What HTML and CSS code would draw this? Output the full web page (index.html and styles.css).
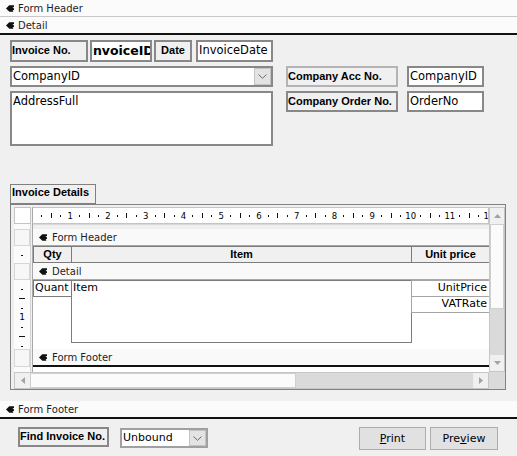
FILE: index.html
```html
<!DOCTYPE html>
<html>
<head>
<meta charset="utf-8">
<title>Invoice form design</title>
<link rel="stylesheet" href="styles.css">
</head>
<body>
<div class="form">
  <div class="bar bar-top">
    <svg class="sel-icon" viewBox="0 0 8 7"><path d="M0 3.5 L3.2 0.3 L8 0.3 L8 2 L6.4 2.4 L8 3.4 L8 5 L6.6 5.3 L7.4 6.8 L3.4 6.8 Z"/></svg>
    <span>Form Header</span>
  </div>
  <div class="bar bar-detail">
    <svg class="sel-icon" viewBox="0 0 8 7"><path d="M0 3.5 L3.2 0.3 L8 0.3 L8 2 L6.4 2.4 L8 3.4 L8 5 L6.6 5.3 L7.4 6.8 L3.4 6.8 Z"/></svg>
    <span>Detail</span>
  </div>

  <div class="detail">
    <div class="row1">
      <div class="lbl lbl-inv">Invoice No.</div>
      <div class="txt txt-invid"><span>InvoiceID</span></div>
      <div class="lbl lbl-date">Date</div>
      <div class="txt txt-date">InvoiceDate</div>
    </div>

    <div class="row2">
      <div class="leftcol">
        <div class="combo combo-company">
          <span class="combo-text">CompanyID</span>
          <span class="combo-btn"><svg viewBox="0 0 9 5"><path d="M0.5 0.5 L4.5 4.3 L8.5 0.5"/></svg></span>
        </div>
        <div class="txt txt-address">AddressFull</div>
      </div>
      <div class="rightcol">
        <div class="pair">
          <div class="lbl lbl-acc">Company Acc No.</div>
          <div class="txt txt-right">CompanyID</div>
        </div>
        <div class="pair pair2">
          <div class="lbl lbl-ord">Company Order No.</div>
          <div class="txt txt-right">OrderNo</div>
        </div>
      </div>
    </div>

    <div class="lbl lbl-details">Invoice Details</div>

    <div class="subform">
      <div class="corner"></div>
      <div class="hruler">
        <div class="ticks">
          <i class="d"></i><i class="h"></i><i class="d"></i><b>1</b>
          <i class="d"></i><i class="h"></i><i class="d"></i><b>2</b>
          <i class="d"></i><i class="h"></i><i class="d"></i><b>3</b>
          <i class="d"></i><i class="h"></i><i class="d"></i><b>4</b>
          <i class="d"></i><i class="h"></i><i class="d"></i><b>5</b>
          <i class="d"></i><i class="h"></i><i class="d"></i><b>6</b>
          <i class="d"></i><i class="h"></i><i class="d"></i><b>7</b>
          <i class="d"></i><i class="h"></i><i class="d"></i><b>8</b>
          <i class="d"></i><i class="h"></i><i class="d"></i><b>9</b>
          <i class="d"></i><i class="h"></i><i class="d"></i><b>10</b>
          <i class="d"></i><i class="h"></i><i class="d"></i><b>11</b>
          <i class="d"></i><i class="h"></i><i class="d"></i><b>12</b>
        </div>
      </div>
      <div class="vscroll">
        <div class="sb-btn"><svg viewBox="0 0 7 4"><path d="M0 4 L3.5 0 L7 4 Z"/></svg></div>
        <div class="vthumb"></div>
        <div class="sb-track"></div>
        <div class="sb-btn"><svg viewBox="0 0 7 4"><path d="M0 0 L3.5 4 L7 0 Z"/></svg></div>
      </div>

      <div class="vruler">
        <div class="vr-gap"></div>
        <div class="vr-sel"></div>
        <div class="vr-marks vr-h17"><i class="d"></i></div>
        <div class="vr-sel"></div>
        <div class="vr-marks vr-h69"><i class="d"></i><i class="h"></i><i class="d"></i><b>1</b><i class="d"></i><i class="h"></i><i class="d"></i></div>
        <div class="vr-sel vr-sel-foot"></div>
        <div class="vr-rest"></div>
      </div>

      <div class="canvas">
        <div class="cv-gap"></div>
        <div class="sbar">
          <svg class="sel-icon" viewBox="0 0 8 7"><path d="M0 3.5 L3.2 0.3 L8 0.3 L8 2 L6.4 2.4 L8 3.4 L8 5 L6.6 5.3 L7.4 6.8 L3.4 6.8 Z"/></svg>
          <span>Form Header</span>
        </div>
        <div class="cv-header">
          <div class="hl hl-qty">Qty</div>
          <div class="hl hl-item">Item</div>
          <div class="hl hl-price">Unit price</div>
        </div>
        <div class="sbar">
          <svg class="sel-icon" viewBox="0 0 8 7"><path d="M0 3.5 L3.2 0.3 L8 0.3 L8 2 L6.4 2.4 L8 3.4 L8 5 L6.6 5.3 L7.4 6.8 L3.4 6.8 Z"/></svg>
          <span>Detail</span>
        </div>
        <div class="cv-detail">
          <div class="st st-qty">Quant</div>
          <div class="st st-item">Item</div>
          <div class="st-col">
            <div class="st st-num">UnitPrice</div>
            <div class="st st-num st-num2">VATRate</div>
          </div>
        </div>
        <div class="sbar sbar-foot">
          <svg class="sel-icon" viewBox="0 0 8 7"><path d="M0 3.5 L3.2 0.3 L8 0.3 L8 2 L6.4 2.4 L8 3.4 L8 5 L6.6 5.3 L7.4 6.8 L3.4 6.8 Z"/></svg>
          <span>Form Footer</span>
        </div>
        <div class="cv-rest"></div>
      </div>

      <div class="hscroll">
        <div class="sb-btn sb-hbtn"><svg viewBox="0 0 4 7"><path d="M4 0 L0 3.5 L4 7 Z"/></svg></div>
        <div class="hthumb"></div>
        <div class="sb-track"></div>
        <div class="sb-btn sb-hbtn"><svg viewBox="0 0 4 7"><path d="M0 0 L4 3.5 L0 7 Z"/></svg></div>
      </div>
      <div class="sc-corner"></div>
    </div>
  </div>

  <div class="bar bar-footer">
    <svg class="sel-icon" viewBox="0 0 8 7"><path d="M0 3.5 L3.2 0.3 L8 0.3 L8 2 L6.4 2.4 L8 3.4 L8 5 L6.6 5.3 L7.4 6.8 L3.4 6.8 Z"/></svg>
    <span>Form Footer</span>
  </div>

  <div class="footer">
    <div class="lbl lbl-find">Find Invoice No.</div>
    <div class="combo combo-find">
      <span class="combo-text">Unbound</span>
      <span class="combo-btn"><svg viewBox="0 0 9 5"><path d="M0.5 0.5 L4.5 4.3 L8.5 0.5"/></svg></span>
    </div>
    <div class="btn btn-print"><span><u>P</u>rint</span></div>
    <div class="btn btn-preview"><span>Pre<u>v</u>iew</span></div>
  </div>
</div>
</body>
</html>
```

FILE: styles.css
```css
* { box-sizing: border-box; margin: 0; padding: 0; }

html, body {
  width: 517px;
  height: 456px;
  overflow: hidden;
}

body {
  background: #f0f0f0;
  font-family: "DejaVu Sans", sans-serif;
  font-size: 11px;
  color: #000;
}

.form {
  display: flex;
  flex-direction: column;
  width: 517px;
  height: 456px;
}

/* ---------- section bars ---------- */
.bar {
  flex: none;
  display: flex;
  align-items: center;
  gap: 4px;
  padding-left: 6px;
  background: #fbfbfb;
  font-size: 10px;
  color: #1e1e1e;
}
.bar-top { height: 17px; border-bottom: 1px solid #c8c8c8; }
.bar-detail, .bar-footer { height: 18px; border-bottom: 2px solid #111; }

.sel-icon {
  width: 8px;
  height: 7px;
  flex: none;
  fill: #111;
}

/* ---------- detail section ---------- */
.detail {
  flex: none;
  height: 366px;
  padding: 5px 0 0 10px;
  display: flex;
  flex-direction: column;
  align-items: flex-start;
}

.lbl {
  background: #f0f0f0;
  border: 2px solid #888;
  font-family: "Liberation Sans", Arial, sans-serif;
  font-weight: bold;
  font-size: 11px;
  line-height: 13px;
  padding: 2px 0 0;
  white-space: nowrap;
  overflow: hidden;
}

.txt {
  background: #fff;
  border: 2px solid #888;
  font-size: 11.5px;
  line-height: 15px;
  padding: 1px 1px 0;
  white-space: nowrap;
  overflow: hidden;
}

.row1 {
  display: flex;
  height: 22px;
}
.lbl-inv { width: 78px; }
.txt-invid {
  width: 62px;
  margin-left: 2px;
  display: flex;
  justify-content: center;
  padding: 1px 0 0;
  font-weight: bold;
  font-size: 12.5px;
}
.lbl-date { width: 38px; margin-left: 2px; text-align: center; }
.txt-date { width: 77px; margin-left: 4px; }

.row2 {
  display: flex;
  gap: 13px;
  margin-top: 4px;
}
.leftcol {
  width: 263px;
  display: flex;
  flex-direction: column;
  gap: 4px;
}
.txt-address { height: 55px; }

.combo {
  display: flex;
  background: #fff;
  border: 2px solid #888;
}
.combo-company { height: 21px; }
.combo-text {
  flex: 1;
  font-size: 11.5px;
  line-height: 15px;
  padding: 1px 1px 0;
  white-space: nowrap;
  overflow: hidden;
}
.combo-btn {
  flex: none;
  width: 17px;
  background: #e3e3e3;
  border: 1px solid #c4c4c4;
  display: flex;
  align-items: center;
  justify-content: center;
}
.combo-btn svg {
  width: 9px;
  height: 5px;
  fill: none;
  stroke: #6a6a6a;
  stroke-width: 1;
}

.rightcol {
  display: flex;
  flex-direction: column;
  gap: 4px;
}
.pair {
  display: flex;
  gap: 9px;
  height: 21px;
}
.lbl-acc { width: 112px; border-color: #b4b4b4; }
.lbl-ord { width: 112px; }
.txt-right { width: 77px; }

.lbl-details {
  width: 86px;
  height: 20px;
  margin-top: 38px;
  padding-top: 1px;
  border-width: 1px;
  border-color: #808080;
  padding-left: 1px;
}

/* ---------- subform ---------- */
.subform {
  width: 496px;
  height: 186px;
  border: 1px solid #828282;
  background: #f0f0f0;
  padding: 2px 0 0 3px;
  display: grid;
  grid-template-columns: 17px 458px 16px;
  grid-template-rows: 17px 148px 17px;
}

.corner {
  grid-row: 1;
  grid-column: 1;
  background: #fff;
  border: 1px solid #c4c4c4;
}

.hruler {
  grid-row: 1;
  grid-column: 2;
  margin-left: 1px;
  background: #fff;
  border: 1px solid #c4c4c4;
  border-left-color: #a8a8a8;
  overflow: hidden;
}
.ticks {
  display: flex;
  height: 100%;
  padding-left: 4.2px;
  align-items: center;
}
.ticks > i, .ticks > b {
  flex: 0 0 9.45px;
  display: flex;
  justify-content: center;
  align-items: center;
  font-style: normal;
  font-weight: normal;
  font-size: 8.5px;
  line-height: 10px;
}
.ticks > i::before {
  content: "";
  width: 1px;
  background: #111;
}
.ticks > i.d::before { height: 2px; }
.ticks > i.h::before { height: 5px; }

.vscroll {
  grid-row: 1 / 3;
  grid-column: 3;
  display: flex;
  flex-direction: column;
  background: #dadada;
  border: 1px solid #c6c6c6;
}
.sb-btn {
  flex: none;
  height: 16px;
  background: #f0f0f0;
  display: flex;
  align-items: center;
  justify-content: center;
}
.sb-btn svg {
  width: 7px;
  height: 4px;
  fill: #a2a2a2;
}
.vthumb {
  flex: none;
  height: 85px;
  background: #fbfbfb;
  border: 1px solid #cfcfcf;
}
.sb-track { flex: 1; }

.vruler {
  grid-row: 2;
  grid-column: 1;
  display: flex;
  flex-direction: column;
  background: #fbfbfb;
  border-right: 1px solid #d4d4d4;
}
.vr-gap { height: 5px; flex: none; }
.vr-sel {
  flex: none;
  height: 17px;
  background: #f7f7f7;
  border: 1px solid #d6d6d6;
}
.vr-sel-foot { height: 18px; }
.vr-rest { flex: 1; }
.vr-marks {
  flex: none;
  display: flex;
  flex-direction: column;
  padding-top: 4.725px;
  overflow: hidden;
}
.vr-h17 { height: 17px; }
.vr-h69 { height: 69px; }
.vr-marks > i, .vr-marks > b {
  flex: 0 0 9.45px;
  display: flex;
  justify-content: center;
  align-items: center;
  font-style: normal;
  font-weight: normal;
  font-size: 9px;
  line-height: 9px;
}
.vr-marks > i::before {
  content: "";
  height: 1px;
  background: #111;
}
.vr-marks > i.d::before { width: 2px; }
.vr-marks > i.h::before { width: 6px; }

.canvas {
  grid-row: 2;
  grid-column: 2;
  margin-left: 1px;
  border-left: 1px solid #a8a8a8;
  background: #fff;
  display: flex;
  flex-direction: column;
  overflow: hidden;
}
.cv-gap { flex: none; height: 5px; background: #f0f0f0; border-top: 1px solid #d8d8d8; }
.sbar {
  flex: none;
  height: 17px;
  display: flex;
  align-items: center;
  gap: 5px;
  padding-left: 6px;
  background: #f9f9f9;
  border-bottom: 1px solid #a8a8a8;
  font-size: 10px;
  color: #1e1e1e;
}
.sbar-foot { height: 18px; border-bottom: 2px solid #111; }

.cv-header {
  flex: none;
  height: 17px;
  display: flex;
  background: #f0f0f0;
}
.hl {
  flex: none;
  height: 17px;
  border: 1px solid #7c7c7c;
  font-family: "Liberation Sans", Arial, sans-serif;
  font-weight: bold;
  font-size: 11px;
  line-height: 14px;
  text-align: center;
  background: #f0f0f0;
  white-space: nowrap;
}
.hl-qty { width: 39px; }
.hl-item { width: 341px; margin-left: -1px; }
.hl-price { width: 79px; margin-left: -1px; }

.cv-detail {
  flex: none;
  height: 69px;
  display: flex;
  align-items: flex-start;
  background: #fff;
}
.st {
  flex: none;
  background: #fff;
  border: 1px solid #7c7c7c;
  font-size: 11px;
  line-height: 14px;
  padding: 0 1px;
  white-space: nowrap;
  overflow: hidden;
}
.st-qty { width: 39px; height: 17px; }
.st-item { width: 341px; height: 63px; margin-left: -1px; }
.st-col {
  flex: none;
  width: 79px;
  margin-left: -1px;
  display: flex;
  flex-direction: column;
}
.st-num {
  width: 79px;
  height: 17px;
  text-align: right;
  border-color: #a4a4a4;
  padding-right: 2px;
}
.st-num2 { margin-top: -1px; }

.cv-rest { flex: 1; background: #fff; }

.hscroll {
  grid-row: 3;
  grid-column: 1 / 3;
  display: flex;
  background: #dadada;
  border: 1px solid #c6c6c6;
}
.sb-hbtn { width: 15px; height: auto; }
.sb-hbtn svg { width: 4px; height: 7px; }
.hthumb {
  flex: none;
  width: 266px;
  background: #fbfbfb;
  border: 1px solid #cfcfcf;
}

.sc-corner {
  grid-row: 3;
  grid-column: 3;
  background: #dadada;
}

/* ---------- footer section ---------- */
.footer {
  flex: 1;
  display: flex;
  align-items: flex-start;
  padding: 8px 0 0 18px;
}
.lbl-find {
  width: 91px;
  height: 20px;
  padding-top: 1px;
}
.combo-find {
  width: 88px;
  height: 20px;
  margin: 1px 0 0 11px;
  border-color: #a0a0a0;
}
.combo-find .combo-text { font-size: 11px; padding-top: 0; }
.combo-find .combo-btn { width: 17px; }

.btn {
  flex: none;
  height: 23px;
  background: #e1e1e1;
  border: 1px solid #adadad;
  display: flex;
  align-items: center;
  justify-content: center;
  font-size: 11px;
}
.btn u { text-decoration: underline; text-underline-offset: 1px; }
.btn-print { width: 67px; margin-left: 151px; }
.btn-preview { width: 68px; margin-left: 4px; }
```
